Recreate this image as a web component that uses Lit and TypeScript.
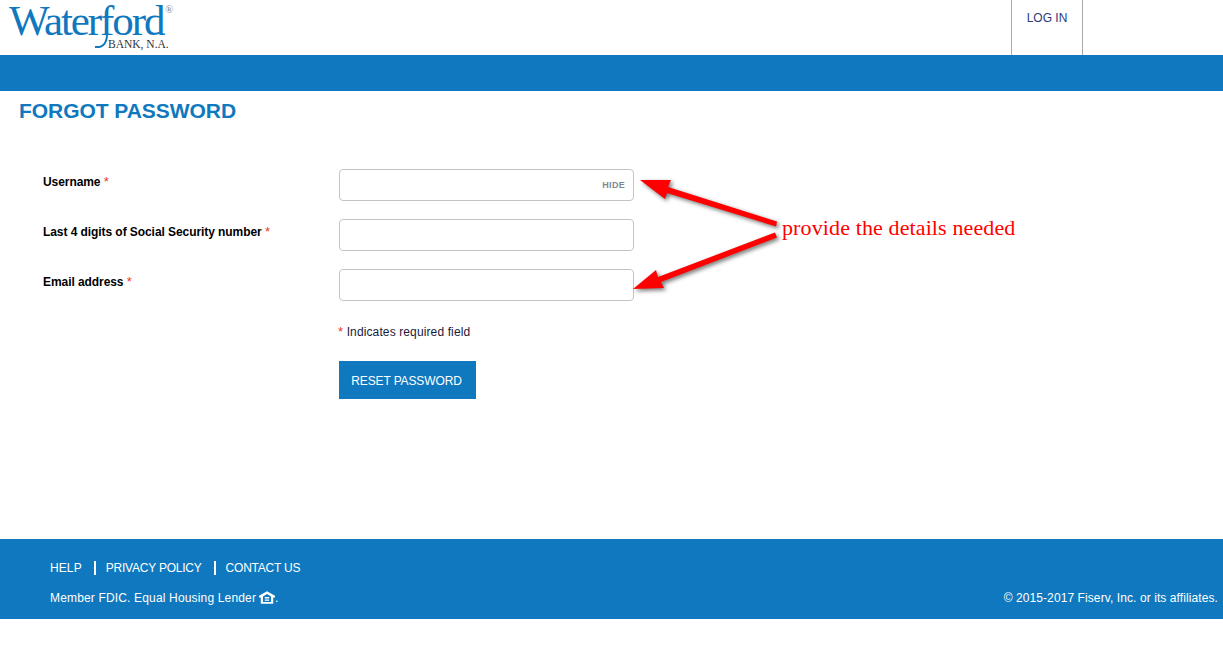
import { LitElement, css, html, svg } from 'lit'
import { customElement } from 'lit/decorators.js'

const fields = [
  { label: 'Username', hide: true },
  { label: 'Last 4 digits of Social Security number', hide: false },
  { label: 'Email address', hide: false },
]

@customElement('app-root')
export class AppRoot extends LitElement {
  static styles = css`
    :host {
      display: block;
      position: relative;
      height: 672px;
      overflow: hidden;
      background: #fff;
      font-family: 'Liberation Sans', Arial, sans-serif;
      color: #000;
    }

    .top {
      display: flex;
      justify-content: space-between;
      height: 55px;
    }

    .logo {
      position: relative;
      display: flex;
      flex-direction: column;
      box-sizing: border-box;
      width: 180px;
      height: 55px;
      padding-top: 3px;
      color: #0f78be;
      font-family: 'Liberation Serif', 'Times New Roman', serif;
    }

    .logo .name {
      margin-left: 9px;
      font-size: 43px;
      line-height: 36px;
      letter-spacing: -2.1px;
      white-space: nowrap;
    }

    .logo .bank {
      margin-left: 108px;
      font-size: 11.5px;
      line-height: 11px;
      color: #333;
      white-space: nowrap;
    }

    .logo .reg {
      position: absolute;
      left: 165px;
      top: 4px;
      font-size: 11px;
      line-height: 10px;
      color: #888;
    }

    .logo svg {
      position: absolute;
      left: 90px;
      top: 0;
    }

    .nav {
      box-sizing: border-box;
      width: 72px;
      height: 55px;
      margin-right: 140px;
      padding-top: 11px;
      border-left: 1px solid #aaa;
      border-right: 1px solid #aaa;
      font-size: 12px;
      line-height: 14px;
      text-align: center;
      color: #2c3a78;
    }

    .band {
      height: 36px;
      background: #0f78be;
    }

    h1 {
      margin: 0;
      padding: 8px 0 0 19px;
      height: 69px;
      box-sizing: border-box;
      font-size: 21px;
      line-height: 24px;
      font-weight: bold;
      letter-spacing: -0.05px;
      color: #0f78be;
    }

    .form {
      display: grid;
      grid-template-columns: 296px 295px;
      grid-auto-rows: 32px;
      row-gap: 18px;
      padding: 9px 0 0 43px;
      height: 379px;
      box-sizing: border-box;
      align-content: start;
    }

    label {
      font-size: 12px;
      line-height: 14px;
      font-weight: bold;
      letter-spacing: -0.07px;
      padding-top: 6px;
    }

    .req {
      color: #e8392c;
      font-size: 13px;
      font-weight: normal;
    }

    .input {
      box-sizing: border-box;
      display: flex;
      align-items: center;
      justify-content: flex-end;
      padding-right: 8px;
      border: 1px solid #c4c4c4;
      border-radius: 4px;
      font-size: 9px;
      font-weight: bold;
      letter-spacing: 0.3px;
      color: #7d8a94;
    }

    .note {
      grid-column: 2;
      margin-left: -1px;
      font-size: 12px;
      line-height: 14px;
      letter-spacing: 0.12px;
      padding-top: 6px;
      color: #1a1a3a;
    }

    .actions {
      grid-column: 2;
      margin-top: -8px;
    }

    button {
      height: 38px;
      width: 137px;
      padding: 2px 2px 0 0;
      border: 0;
      background: #0f78be;
      color: #fff;
      font: 12px/14px 'Liberation Sans', Arial, sans-serif;
      letter-spacing: -0.13px;
    }

    footer {
      box-sizing: border-box;
      height: 80px;
      padding: 22px 5px 0 50px;
      background: #0f78be;
      color: #fff;
      font-size: 12px;
      line-height: 14px;
    }

    .links {
      display: flex;
      margin-bottom: 16px;
      letter-spacing: -0.22px;
    }

    .links span:first-child {
      letter-spacing: 0.1px;
    }

    .links span + span {
      margin-left: 12px;
      padding-left: 10px;
      border-left: 2px solid #fff;
    }

    .legal {
      display: flex;
      justify-content: space-between;
      letter-spacing: 0.16px;
    }

    .legal span:last-child {
      letter-spacing: 0.09px;
    }

    .legal svg {
      vertical-align: -2px;
      margin-left: 3px;
    }

    .overlay {
      position: absolute;
      left: 0;
      top: 0;
      pointer-events: none;
    }

    .arrows {
      fill: #f00;
      filter: drop-shadow(2px 2px 2px rgba(0, 0, 0, 0.55));
    }

    .note-red {
      position: absolute;
      left: 782px;
      top: 214px;
      font-family: 'Liberation Serif', 'Times New Roman', serif;
      font-size: 22px;
      line-height: 28px;
      letter-spacing: 0.12px;
      color: #f00;
      white-space: nowrap;
    }
  `

  private arrows() {
    return html`<svg class="overlay" width="1223" height="672" viewBox="0 0 1223 672">
      <g class="arrows">
        ${svg`
          <polygon points="640,180 671,180 668,187 777,221.5 776,226.5 667,193 665,199" />
          <polygon points="633,289 656,270 658,277 775,232.5 777,237.5 661,282 664,288" />
        `}
      </g>
    </svg>`
  }

  render() {
    return html`
      <div class="top">
        <div class="logo">
          <span class="name">Waterford</span>
          <span class="bank">BANK, N.A.</span>
          <span class="reg">®</span>
          <svg width="30" height="52" viewBox="0 0 30 52">
            <path fill="none" stroke="#0f78be" stroke-width="2" d="M17 34 C17 42 14 48 5 47" />
          </svg>
        </div>
        <div class="nav">LOG IN</div>
      </div>
      <div class="band"></div>
      <h1>FORGOT PASSWORD</h1>
      <div class="form">
        ${fields.map(
          (f) => html`
            <label>${f.label} <span class="req">*</span></label>
            <div class="input">${f.hide ? 'HIDE' : ''}</div>
          `,
        )}
        <div class="note"><span class="req">*</span> Indicates required field</div>
        <div class="actions"><button>RESET PASSWORD</button></div>
      </div>
      <footer>
        <div class="links">
          <span>HELP</span>
          <span>PRIVACY POLICY</span>
          <span>CONTACT US</span>
        </div>
        <div class="legal">
          <span>Member FDIC. Equal Housing Lender<svg width="16" height="13" viewBox="0 0 18 14">
              <path fill="#fff" d="M9 0 L18 5 V7 H16 V14 H2 V7 H0 V5 Z M4.5 6 V12 H13.5 V6 L9 3.2 Z" />
              <path fill="#fff" d="M6.5 6.5 H11.5 V8 H6.5 Z M6.5 9.2 H11.5 V10.7 H6.5 Z" />
            </svg>.</span>
          <span>© 2015-2017 Fiserv, Inc. or its affiliates.</span>
        </div>
      </footer>
      ${this.arrows()}
      <div class="note-red">provide the details needed</div>
    `
  }
}
